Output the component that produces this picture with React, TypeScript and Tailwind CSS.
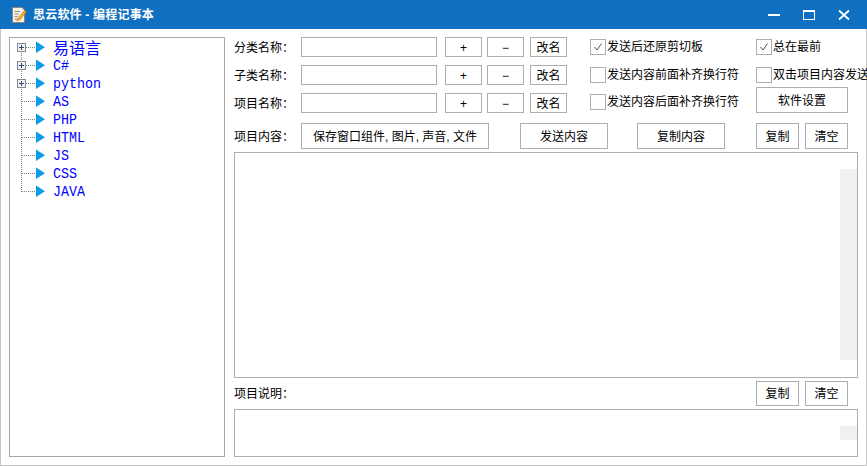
import React from 'react';

const CJK = "font-['Liberation_Sans','Noto_Sans_CJK_SC',sans-serif]";

const treeItems = [
  { name: '易语言', plus: true },
  { name: 'C#', plus: true },
  { name: 'python', plus: true },
  { name: 'AS' },
  { name: 'PHP' },
  { name: 'HTML' },
  { name: 'JS' },
  { name: 'CSS' },
  { name: 'JAVA' },
];

// 树节点前面的连接线、加号框和蓝色三角
const TreeGlyph = ({ plus, first, last }: { plus?: boolean; first?: boolean; last?: boolean }) => (
  <svg width="43" height="18" viewBox="0 0 43 18" className="shrink-0" shapeRendering="crispEdges">
    <line
      x1="11.5"
      y1={first ? 8 : 0}
      x2="11.5"
      y2={last ? 8.5 : 18}
      stroke="#808080"
      strokeDasharray="1 1"
    />
    <line x1={plus ? 16 : 12} y1="8.5" x2="26" y2="8.5" stroke="#808080" strokeDasharray="1 1" />
    {plus && (
      <g>
        <rect x="7.5" y="4.5" width="8" height="8" fill="#eef0f4" stroke="#8a8a8a" />
        <line x1="9" y1="8.5" x2="14" y2="8.5" stroke="#2f4a80" />
        <line x1="11.5" y1="6" x2="11.5" y2="11" stroke="#2f4a80" />
      </g>
    )}
    <polygon points="26,2.5 35,8.2 26,14" fill="#0b9de8" shapeRendering="auto" />
  </svg>
);

const Btn = ({ className, children }: { className: string; children: React.ReactNode }) => (
  <div className={`flex shrink-0 items-center justify-center border border-[#adadad] bg-white pt-[1px] text-[12px] text-black ${className}`}>
    {children}
  </div>
);

const Check = ({ label, checked, className }: { label: string; checked?: boolean; className?: string }) => (
  <div className={`flex h-[16px] items-center whitespace-nowrap text-[12px] text-black ${className ?? ''}`}>
    <div className="flex h-[16px] w-[16px] shrink-0 items-center justify-center border border-[#adadad] bg-white">
      {checked && (
        <svg width="10" height="10" viewBox="0 0 10 10">
          <path d="M1.5 5 L4 8 L8.5 1.5" fill="none" stroke="#555" strokeWidth="1" />
        </svg>
      )}
    </div>
    <span className="ml-[1px]">{label}</span>
  </div>
);

const NameRow = ({ label }: { label: string }) => (
  <div className="flex h-[20px] items-center text-[12px] text-black">
    <span className="w-[67px] shrink-0 pt-[1px]">{label}</span>
    <div className="h-[20px] w-[136px] shrink-0 border border-[#adadad] bg-white" />
    <Btn className="ml-[8px] h-[20px] w-[37px] text-[10px]">+</Btn>
    <Btn className="ml-[5px] h-[20px] w-[37px] text-[10px]">−</Btn>
    <Btn className="ml-[6px] h-[20px] w-[37px]">改名</Btn>
  </div>
);

export default function App() {
  return (
    <div className={`flex h-[466px] w-[867px] flex-col overflow-hidden bg-white ${CJK}`}>
      {/* 标题栏 */}
      <div className="flex h-[29px] shrink-0 items-center bg-[#0f6fc1] text-white">
        <svg width="16" height="18" viewBox="0 0 16 18" className="ml-[11px]">
          <path d="M1.5 1.5 H11 L13.5 4 V16.5 H1.5 Z" fill="#f5f1e6" stroke="#8a8578" />
          <path d="M3.5 5.5 H9 M3.5 8 H8 M3.5 10.5 H6.5 M3.5 13 H6" stroke="#8f8f8f" />
          <path d="M6.5 12.5 L13.5 4.5 L15.5 6 L8.5 14 L6 15 Z" fill="#f2a92b" stroke="#b5701a" strokeWidth="0.5" />
        </svg>
        <span className="ml-[6px] text-[12px] font-bold tracking-[0.2px]">思云软件 - 编程记事本</span>
        <div className="ml-auto mr-[17px] flex items-center gap-[23px]">
          <svg width="12" height="12" viewBox="0 0 12 12">
            <rect x="0" y="5" width="12" height="2" fill="#fff" />
          </svg>
          <svg width="12" height="12" viewBox="0 0 12 12" shapeRendering="crispEdges">
            <rect x="0.5" y="1.5" width="11" height="9" fill="none" stroke="#fff" />
            <rect x="0" y="1" width="12" height="2" fill="#fff" />
          </svg>
          <svg width="12" height="12" viewBox="0 0 12 12">
            <path d="M1 1.5 L11 10.5 M11 1.5 L1 10.5" stroke="#fff" strokeWidth="1.8" />
          </svg>
        </div>
      </div>

      <div className="flex min-h-0 flex-1 border-x border-b border-[#c4c4c4] pl-[8px] pt-[8px]">
        {/* 左侧分类树 */}
        <div className="h-[420px] w-[216px] shrink-0 border border-[#a6a6a6] bg-white pt-[1px]">
          {treeItems.map((item, i) => (
            <div key={item.name} className="flex h-[18px] items-center">
              <TreeGlyph plus={item.plus} first={i === 0} last={i === treeItems.length - 1} />
              <span
                className={`inline-block whitespace-nowrap text-[#0000ff] ${
                  i === 0
                    ? "-mt-[2px] text-[16px] font-['Noto_Sans_CJK_SC',sans-serif]"
                    : "mt-[2px] scale-y-[1.15] text-[13.33px] font-['Liberation_Mono',monospace]"
                }`}
              >
                {item.name}
              </span>
            </div>
          ))}
        </div>

        {/* 右侧内容 */}
        <div className="ml-[9px] flex w-[624px] shrink-0 flex-col">
          <div className="flex h-[76px]">
            <div className="flex w-[333px] shrink-0 flex-col gap-[8px]">
              <NameRow label="分类名称：" />
              <NameRow label="子类名称：" />
              <NameRow label="项目名称：" />
            </div>
            <div className="ml-[23px] flex w-[166px] shrink-0 flex-col pt-[2px]">
              <Check checked label="发送后还原剪切板" />
              <Check label="发送内容前面补齐换行符" className="mt-[12px]" />
              <Check label="发送内容后面补齐换行符" className="mt-[11px]" />
            </div>
            <div className="flex w-[102px] shrink-0 flex-col pt-[2px]">
              <Check checked label="总在最前" />
              <Check label="双击项目内容发送" className="mt-[12px]" />
              <Btn className="mt-[4px] h-[26px] w-[92px]">软件设置</Btn>
            </div>
          </div>

          <div className="mt-[10px] flex h-[26px] items-center text-[12px] text-black">
            <span className="w-[67px] shrink-0 pt-[1px]">项目内容：</span>
            <Btn className="h-[26px] w-[188px]">保存窗口组件, 图片, 声音, 文件</Btn>
            <Btn className="ml-[31px] h-[26px] w-[88px]">发送内容</Btn>
            <Btn className="ml-[29px] h-[26px] w-[88px]">复制内容</Btn>
            <Btn className="ml-[31px] h-[26px] w-[43px]">复制</Btn>
            <Btn className="ml-[6px] h-[26px] w-[43px]">清空</Btn>
          </div>

          <div className="mt-[3px] flex h-[226px] justify-end border border-[#adadad] bg-white pb-[17px] pt-[16px]">
            <div className="w-[17px] bg-[#f0f0f0]" />
          </div>

          <div className="mt-[3px] flex h-[25px] items-center text-[12px] text-black">
            <span>项目说明：</span>
            <Btn className="ml-auto h-[25px] w-[43px]">复制</Btn>
            <Btn className="ml-[6px] mr-[10px] h-[25px] w-[43px]">清空</Btn>
          </div>

          <div className="mt-[3px] flex h-[48px] justify-end border border-[#adadad] bg-white pb-[16px] pt-[16px]">
            <div className="w-[17px] bg-[#f0f0f0]" />
          </div>
        </div>
      </div>
    </div>
  );
}
